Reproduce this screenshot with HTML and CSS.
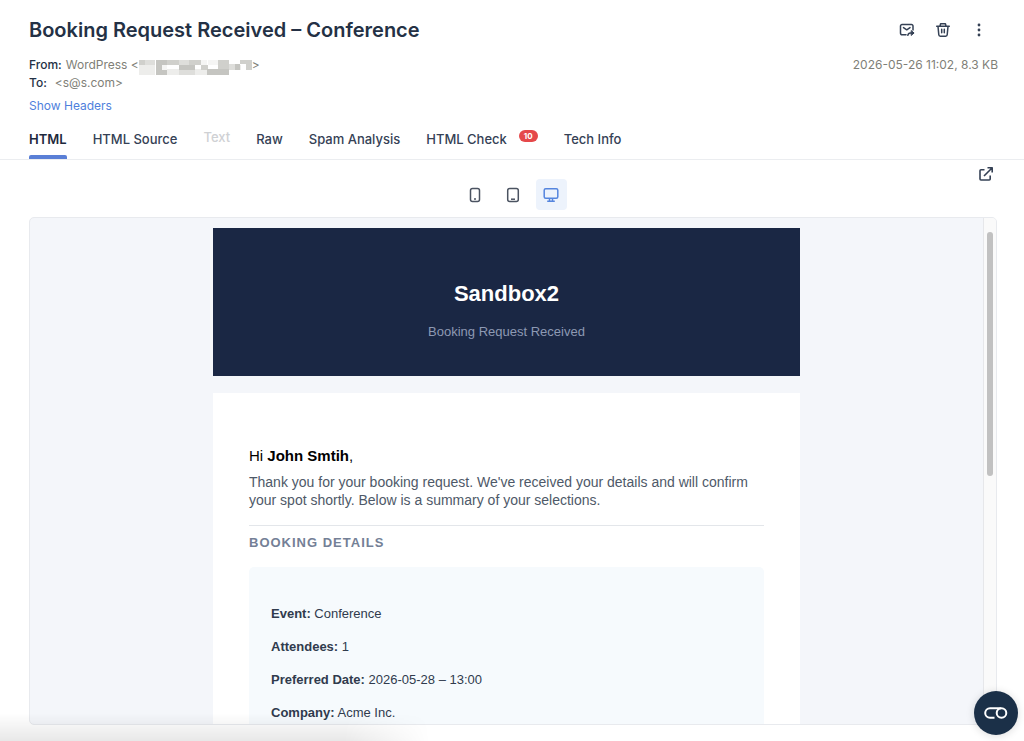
FILE: index.html
```html
<!DOCTYPE html>
<html lang="en">
<head>
<meta charset="utf-8">
<meta name="viewport" content="width=device-width, initial-scale=1">
<title>Booking Request Received – Conference</title>
<link rel="stylesheet" href="styles.css">
</head>
<body>
<div class="page">
  <header class="message-head">
    <div class="title-row">
      <h1 class="subject">Booking Request Received – Conference</h1>
      <div class="actions">
        <button class="icon-btn" type="button" aria-label="Forward">
          <svg width="16" height="16" viewBox="0 0 16 16" fill="none" stroke="currentColor" stroke-width="1.5" stroke-linecap="round" stroke-linejoin="round"><path d="M7 12.800H3a1.500 1.500 0 0 1-1.500-1.500V4A1.500 1.500 0 0 1 3 2.500h9.500A1.500 1.500 0 0 1 14 4v4M4.500 5.600 7.750 7.800 11 5.600M8.800 13.300c.3-1.600 1.200-2.300 2.700-2.300h3"/><path d="M12.500 8.800 15 11l-2.500 2.200z" fill="currentColor" stroke-width="1"/></svg>
        </button>
        <button class="icon-btn" type="button" aria-label="Delete">
          <svg width="16" height="16" viewBox="0 0 16 16" fill="none" stroke="currentColor" stroke-width="1.500" stroke-linecap="round" stroke-linejoin="round"><path d="M1.700 4.200h12.600M5 4l.6-2.200h4.800L11 4M3 4.500l.8 8.300A1.500 1.500 0 0 0 5.300 14.200h5.400a1.500 1.500 0 0 0 1.500-1.400L13 4.500M6.700 7.200v3.600M9.300 7.200v3.600"/></svg>
        </button>
        <button class="icon-btn" type="button" aria-label="More actions">
          <svg width="16" height="16" viewBox="0 0 16 16" fill="currentColor"><circle cx="8" cy="3" r="1.400"/><circle cx="8" cy="8" r="1.400"/><circle cx="8" cy="13" r="1.400"/></svg>
        </button>
      </div>
    </div>
    <div class="meta-row">
      <dl class="addresses">
        <div class="address"><dt>From:</dt><dd>WordPress &lt;<svg class="mosaic" width="113" height="16" viewBox="0 0 113 16" shape-rendering="crispEdges" role="img" aria-label="Hidden address"><path fill="#ededeb" d="M0 5h16v10H0zM28 9h12v6H28zM56 9h12v6H56zM90 5h12v5H90z"/><path fill="#d0d0cc" d="M0 0h6v5H0zM28 0h12v5H28zM50 0h12v5H50zM62 5h7v5h-7zM79 0h11v10H79zM101 0h12v4h-12zM107 4h6v6h-6z"/><path fill="#dededb" d="M6 0h10v5H6zM40 0h10v10H40zM40 10h16v5H40zM90 4h6v6h-6z"/><path fill="#c5c5c1" d="M17 0h11v15H17zM40 5h16v5H40zM68 9h22v6H68zM96 4h5v6h-5z"/><path fill="#f5f5f4" d="M23 5h5v5h-5zM62 0h6v5h-6zM69 0h10v5H69z"/></svg>&gt;</dd></div>
        <div class="address"><dt>To:</dt><dd class="to">&lt;s@s.com&gt;</dd></div>
      </dl>
      <p class="stamp">2026-05-26 11:02, 8.3 KB</p>
    </div>
    <a class="show-headers" href="#">Show Headers</a>
  </header>

  <nav class="tabs" aria-label="Message views">
    <button class="tab active" type="button">HTML</button>
    <button class="tab" type="button">HTML Source</button>
    <button class="tab off" type="button" disabled>Text</button>
    <button class="tab" type="button">Raw</button>
    <button class="tab" type="button">Spam Analysis</button>
    <button class="tab" type="button">HTML Check<span class="badge">10</span></button>
    <button class="tab" type="button">Tech Info</button>
  </nav>

  <main class="viewer">
    <div class="toolbar">
      <div class="devices">
        <button class="device" type="button" aria-label="Phone">
          <svg width="16" height="16" viewBox="0 0 16 16" fill="none" stroke="currentColor" stroke-width="1.500"><rect x="3.500" y="1.500" width="9" height="13" rx="2"/><path d="M8 11v2"/></svg>
        </button>
        <button class="device" type="button" aria-label="Tablet">
          <svg width="16" height="16" viewBox="0 0 16 16" fill="none" stroke="currentColor" stroke-width="1.500"><rect x="2.700" y="1.500" width="10.600" height="13" rx="2"/><path d="M6 12.200h4"/></svg>
        </button>
        <button class="device selected" type="button" aria-label="Desktop" aria-pressed="true">
          <svg width="16" height="16" viewBox="0 0 16 16" fill="none" stroke="currentColor" stroke-width="1.500" stroke-linejoin="round"><rect x="1.200" y="1.700" width="13.600" height="9.600" rx="1.500"/><path d="M6.500 11.500v2.700M9.500 11.500v2.700M4.200 14.200h7.600"/></svg>
        </button>
      </div>
      <button class="icon-btn popout" type="button" aria-label="Open in new tab">
        <svg width="16" height="16" viewBox="0 0 16 16" fill="none" stroke="currentColor" stroke-width="1.600" stroke-linejoin="round"><path d="M6.500 3.800H3A1 1 0 0 0 2 4.800V13a1 1 0 0 0 1 1h8.200a1 1 0 0 0 1-1V9.500M6 10l7.500-7.500M9.500 1.800h4.700v4.700"/></svg>
      </button>
    </div>

    <section class="preview">
      <div class="email">
        <div class="banner">
          <h2 class="brand">Sandbox2</h2>
          <p class="tagline">Booking Request Received</p>
        </div>
        <div class="card">
          <p class="greeting">Hi <strong>John Smtih</strong>,</p>
          <p class="intro">Thank you for your booking request. We've received your details and will confirm your spot shortly. Below is a summary of your selections.</p>
          <h3 class="section-title">BOOKING DETAILS</h3>
          <div class="details">
            <p><strong>Event:</strong> Conference</p>
            <p><strong>Attendees:</strong> 1</p>
            <p><strong>Preferred Date:</strong> 2026-05-28 – 13:00</p>
            <p><strong>Company:</strong> Acme Inc.</p>
          </div>
        </div>
      </div>
      <div class="track"><div class="thumb"></div></div>
    </section>
  </main>
</div>
<div class="status-shade"></div>
<button class="fab" type="button" aria-label="Privacy settings">
  <svg width="24" height="14" viewBox="0 0 24 14" fill="none" stroke="currentColor" stroke-width="2"><path d="M10.500 11.800H6A4.800 4.800 0 0 1 6 2.200h11"/><circle cx="17.500" cy="7" r="4.800"/></svg>
</button>
</body>
</html>
```
FILE: styles.css
```css
* { box-sizing: border-box; }

body {
  margin: 0;
  background: #fff;
  color: #243145;
  font-family: Inter, "Liberation Sans", sans-serif;
  font-size: 13px;
  line-height: 18px;
}

h1, h2, h3, p, dl, dd { margin: 0; }

button {
  border: 0;
  padding: 0;
  background: none;
  color: inherit;
  font: inherit;
}

svg { display: block; }

.page {
  display: flex;
  flex-direction: column;
  height: 100vh;
  padding-bottom: 16px;
}

.message-head {
  padding: 16px 26px 0 29px;
  font-size: 12px;
}

.title-row, .meta-row {
  display: flex;
  justify-content: space-between;
}

.title-row { align-items: center; }

.subject {
  font-size: 20px;
  font-weight: 600;
  line-height: 28px;
}

.actions {
  display: flex;
  gap: 20px;
  padding-right: 11px;
  color: #354155;
}

.meta-row { padding-top: 12px; }

.address {
  display: flex;
  gap: 4px;
  height: 18px;
}

.address dt { font-weight: 500; }

.address dd {
  display: flex;
  color: #7f7f78;
}

.address .to { padding-left: 4px; }

.mosaic { margin-top: 4px; }

.stamp { color: #7f7f78; }

.show-headers {
  display: block;
  width: fit-content;
  margin-top: 5px;
  color: #4f7fdc;
  text-decoration: none;
}

.tabs {
  display: flex;
  gap: 26px;
  margin-top: 12px;
  padding: 0 29px;
  border-bottom: 1px solid #ebedf0;
}

.tab {
  display: flex;
  height: 32px;
  padding-top: 3px;
  border-bottom: 4px solid transparent;
  color: #354155;
  font-weight: 500;
}

.tab.active {
  position: relative;
  border: 0;
  color: #1d293d;
  font-weight: 600;
}

.tab.active::after {
  content: "";
  position: absolute;
  inset: auto 0 0;
  height: 4px;
  border-radius: 2px 2px 0 0;
  background: #5a7fd6;
}

.tab.off {
  padding-top: 1px;
  color: #cfd1d4;
}

.badge {
  height: 12px;
  margin-left: 12px;
  padding: 0 5px;
  border-radius: 6px;
  background: #e5484a;
  color: #fff;
  font-size: 8px;
  font-weight: 700;
  line-height: 12px;
}

.viewer {
  display: flex;
  flex: 1;
  flex-direction: column;
  min-height: 0;
  padding: 0 27px 0 29px;
}

.toolbar {
  display: grid;
  grid-template-columns: 1fr auto 1fr;
  padding: 6px 0 7px;
}

.devices {
  display: flex;
  grid-column: 2;
  gap: 7px;
  padding-top: 13px;
}

.device {
  display: grid;
  place-items: center;
  width: 31px;
  height: 31px;
  border-radius: 4px;
  color: #4b5361;
}

.device.selected {
  background: #edf3fc;
  color: #5585de;
}

.popout {
  align-self: start;
  justify-self: end;
  padding-right: 3px;
  color: #354155;
}

.preview {
  display: flex;
  flex: 1;
  min-height: 0;
  overflow: hidden;
  border: 1px solid #e8eaee;
  border-radius: 5px;
  background: #f4f6fa;
  font-family: "Liberation Sans", Arial, sans-serif;
}

.email {
  flex: 1;
  max-width: 587px;
  margin: 0 auto;
  padding-top: 10px;
}

.banner {
  padding: 52px 20px 35px;
  background: #1a2744;
  text-align: center;
}

.brand {
  color: #fff;
  font-size: 22px;
  line-height: 28px;
}

.tagline {
  padding-top: 15px;
  color: #8d99b3;
}

.card {
  margin-top: 17px;
  padding: 54px 36px 40px;
  background: #fff;
}

.greeting {
  color: #000;
  font-size: 15px;
}

.intro {
  padding: 8px 0 16px;
  border-bottom: 1px solid #e3e6ea;
  color: #4e5968;
  font-size: 14px;
}

.section-title {
  padding-top: 8px;
  color: #748096;
  font-size: 13px;
  letter-spacing: 1px;
}

.details {
  display: grid;
  gap: 15px;
  margin-top: 15px;
  padding: 38px 22px;
  border-radius: 5px;
  background: #f6fafd;
  color: #303b4d;
}

.track {
  width: 13px;
  padding: 14px 3px;
  border-left: 1px solid #e6e7ea;
  background: #fafafa;
}

.thumb {
  height: 51%;
  border-radius: 4px;
  background: #c1c1c1;
}

.status-shade {
  position: fixed;
  bottom: 0;
  left: 0;
  width: 42%;
  height: 28px;
  background: linear-gradient(to top, rgba(0, 0, 0, 0.09), transparent);
  mask-image: linear-gradient(to right, #000 80%, transparent);
  pointer-events: none;
}

.fab {
  position: fixed;
  right: 6px;
  bottom: 6px;
  display: grid;
  place-items: center;
  width: 44px;
  height: 44px;
  border-radius: 50%;
  background: #1b3048;
  box-shadow: 0 1px 8px rgba(0, 0, 0, 0.14);
  color: #fff;
}
```
